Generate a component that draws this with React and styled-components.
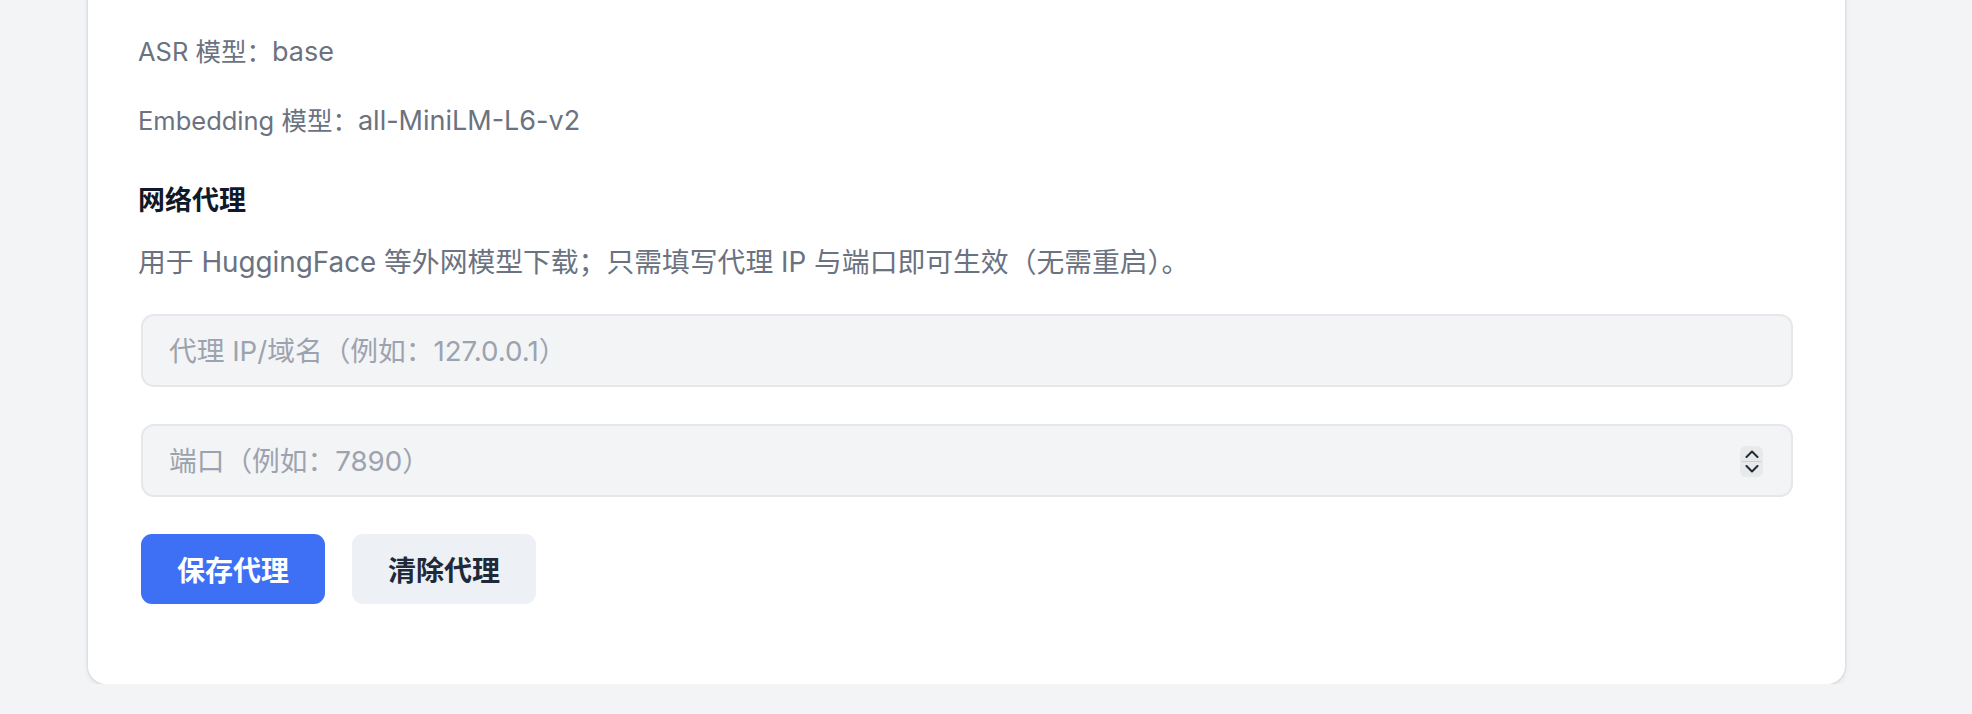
import React, {useState} from 'react';
import styled, {createGlobalStyle} from 'styled-components';

const GlobalStyle = createGlobalStyle`
    html, body {
        margin: 0;
        padding: 0;
        background: #f3f4f6;
        font-family: Inter, "Noto Sans CJK SC", sans-serif;
        overflow: hidden;
    }
`

const Page = styled.div`
    min-height: 714px;
    padding: 0 0 0 88px;
    box-sizing: border-box;
`

const Card = styled.div`
    width: 1757px;
    margin-top: -40px;
    padding: 72px 50px 80px;
    box-sizing: border-box;
    background: #ffffff;
    border-radius: 18px;
    box-shadow: 0 0 0 1.5px rgba(17, 24, 39, 0.06), 0 3px 6px rgba(17, 24, 39, 0.07);
`

const InfoRow = styled.div`
    display: flex;
    align-items: baseline;
    height: 40px;
    line-height: 40px;
    margin-bottom: 29px;
`

const InfoLabel = styled.span`
    font-size: 25.5px;
    color: #6b7280;
`

const InfoValue = styled.span`
    font-size: 27px;
    color: #6b7280;
`

const SectionTitle = styled.h3`
    margin: 40px 0 0;
    font-size: 27px;
    line-height: 40px;
    font-weight: 700;
    color: #111827;
`

const Hint = styled.p`
    margin: 21px 0 0;
    font-size: 27.8px;
    line-height: 40px;
    color: #6b7280;
`

const Form = styled.form`
    display: flex;
    flex-direction: column;
    gap: 37px;
    margin: 32px 2px 0 3px;
`

const Field = styled.div`
    position: relative;
`

const Input = styled.input`
    display: block;
    width: 100%;
    height: 73px;
    box-sizing: border-box;
    padding: 0 26px;
    border: 2px solid #e5e7eb;
    border-radius: 13px;
    background: #f3f4f6;
    font-family: inherit;
    font-size: 27.7px;
    color: #111827;
    outline: none;
    -moz-appearance: textfield;

    &::placeholder {
        color: #9ca3af;
    }

    &::-webkit-outer-spin-button,
    &::-webkit-inner-spin-button {
        -webkit-appearance: none;
        margin: 0;
    }
`

const Spinner = styled.div`
    position: absolute;
    right: 30px;
    top: 22px;
    width: 23px;
    height: 31px;
    border-radius: 6px;
    background: #e8e9eb;
    display: flex;
    flex-direction: column;
    align-items: center;
    justify-content: space-between;
    padding: 4px 0;
    box-sizing: border-box;
`

const SpinDivider = styled.div`
    width: 19px;
    height: 1px;
    background: #cdcfd3;
`

const Actions = styled.div`
    display: flex;
    gap: 27px;
`

const Button = styled.button`
    height: 70px;
    padding: 0 36px;
    border: none;
    border-radius: 11px;
    font-family: inherit;
    font-size: 28px;
    font-weight: 700;
    cursor: pointer;
    background: ${p => p.primary ? '#3d70f5' : '#edf0f4'};
    color: ${p => p.primary ? '#ffffff' : '#1f2937'};
`

const Chevron = ({up}) => (
    <svg width="14" height="8" viewBox="0 0 14 8" fill="none">
        <path
            d={up ? "M1.5 7 L7 1.5 L12.5 7" : "M1.5 1 L7 6.5 L12.5 1"}
            stroke="#1f2937"
            strokeWidth="2"
            strokeLinecap="round"
            strokeLinejoin="round"
        />
    </svg>
)

const initialValues = {
    host: "",
    port: ""
}

const App = () => {
    const [values, setValues] = useState(initialValues);

    const onChange = evt => {
        setValues({
            ...values,
            [evt.target.name]: evt.target.value
        });
    };

    return (
        <Page>
            <GlobalStyle />
            <Card>
                <InfoRow>
                    <InfoLabel>ASR 模型：</InfoLabel>
                    <InfoValue>base</InfoValue>
                </InfoRow>
                <InfoRow>
                    <InfoLabel>Embedding 模型：</InfoLabel>
                    <InfoValue>all-MiniLM-L6-v2</InfoValue>
                </InfoRow>
                <SectionTitle>网络代理</SectionTitle>
                <Hint>用于 HuggingFace 等外网模型下载；只需填写代理 IP 与端口即可生效（无需重启）。</Hint>
                <Form onSubmit={e => e.preventDefault()}>
                    <Field>
                        <Input
                            type="text"
                            name="host"
                            placeholder="代理 IP/域名（例如：127.0.0.1）"
                            value={values.host}
                            onChange={onChange}
                        />
                    </Field>
                    <Field>
                        <Input
                            type="number"
                            name="port"
                            placeholder="端口（例如：7890）"
                            value={values.port}
                            onChange={onChange}
                        />
                        <Spinner>
                            <Chevron up />
                            <SpinDivider />
                            <Chevron />
                        </Spinner>
                    </Field>
                    <Actions>
                        <Button primary type="submit">保存代理</Button>
                        <Button type="button" onClick={() => setValues(initialValues)}>清除代理</Button>
                    </Actions>
                </Form>
            </Card>
        </Page>
    );
};

export default App;
